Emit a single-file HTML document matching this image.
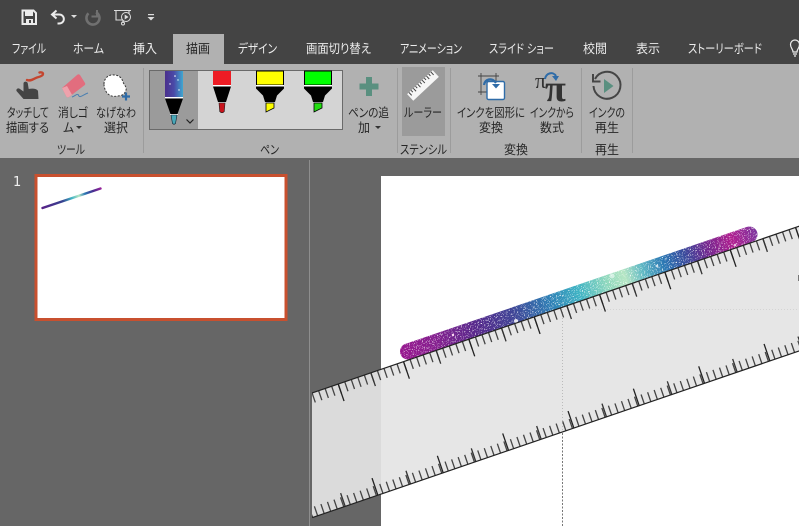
<!DOCTYPE html>
<html lang="ja"><head><meta charset="utf-8"><title>描画</title>
<style>
html,body{margin:0;padding:0;background:#666;width:799px;height:526px;overflow:hidden}
svg{display:block}
text{font-family:"Liberation Sans","Noto Sans CJK JP",sans-serif;font-feature-settings:"palt";font-size:12.500px}
.t text{fill:#ececec}
.r text{fill:#262626}
</style></head><body>
<svg width="799" height="526" viewBox="0 0 799 526" xmlns="http://www.w3.org/2000/svg">
<defs>
<linearGradient id="ink" gradientUnits="userSpaceOnUse" x1="400" y1="354" x2="757" y2="232">
<stop offset="0" stop-color="#98188f"/><stop offset=".1" stop-color="#85208f"/><stop offset=".22" stop-color="#552a8c"/><stop offset=".32" stop-color="#3f4596"/><stop offset=".42" stop-color="#2f7fb5"/><stop offset=".5" stop-color="#3fb3c4"/><stop offset=".58" stop-color="#8fd8bd"/><stop offset=".63" stop-color="#b6e6c4"/><stop offset=".68" stop-color="#5fb8c4"/><stop offset=".74" stop-color="#2c78b4"/><stop offset=".8" stop-color="#3b4a9c"/><stop offset=".86" stop-color="#72288f"/><stop offset=".93" stop-color="#b01f90"/><stop offset="1" stop-color="#7d379f"/>
</linearGradient>
<linearGradient id="minik" gradientUnits="userSpaceOnUse" x1="41" y1="208" x2="102" y2="188">
<stop offset="0" stop-color="#5a2088"/><stop offset=".35" stop-color="#35408f"/><stop offset=".5" stop-color="#3fb3c4"/><stop offset=".62" stop-color="#b6e6c4"/><stop offset=".72" stop-color="#2c78b4"/><stop offset=".85" stop-color="#45308f"/><stop offset="1" stop-color="#a0209a"/>
</linearGradient>
<linearGradient id="galaxy" x1="0" y1="0" x2="1" y2="0">
<stop offset="0" stop-color="#4a2f8c"/><stop offset=".5" stop-color="#4a4aa8"/><stop offset="1" stop-color="#3fa8d0"/>
</linearGradient>
<filter id="gl" x="-5%" y="-20%" width="110%" height="140%" color-interpolation-filters="sRGB">
<feTurbulence type="fractalNoise" baseFrequency=".85" numOctaves="2" seed="4"/>
<feColorMatrix values="0 0 0 0 1 0 0 0 0 1 0 0 0 0 1 6 0 0 0 -3.500"/>
<feComposite in2="SourceAlpha" operator="in" result="s"/>
<feMerge><feMergeNode in="SourceGraphic"/><feMergeNode in="s"/></feMerge>
</filter>
<clipPath id="rc"><rect x="312" y="160" width="487" height="366"/></clipPath>
</defs>

<!-- backgrounds -->
<rect width="799" height="64" fill="#444"/>
<rect y="64" width="799" height="94" fill="#b1b1b1"/>
<rect y="158" width="799" height="368" fill="#666"/>
<rect x="173" y="34" width="51" height="30" fill="#b1b1b1"/>
<rect x="309" y="160" width="1" height="366" fill="#8e8e8e"/>

<!-- QAT -->
<g>
<path d="M22.500 10.500h11l2.500 2.500v11h-13.500z" fill="none" stroke="#ececec" stroke-width="2"/>
<rect x="25" y="11" width="8" height="5" fill="#ececec"/><rect x="26" y="19" width="7" height="5" fill="#ececec"/><rect x="29" y="20" width="2" height="3" fill="#444"/>
<path d="M56.500 10.500l-4.500 4 4.500 4" fill="none" stroke="#ececec" stroke-width="2"/>
<path d="M52 14.500h7c6.500 0 6.500 9 0 9h-1.500" fill="none" stroke="#ececec" stroke-width="2"/>
<path d="M71 15h6l-3 3z" fill="#ddd"/>
<path d="M96 12.300A6.500 6.500 0 1 1 88.500 13.300" fill="none" stroke="#707070" stroke-width="2.600"/>
<path d="M97 10v6.500h-5.500" fill="none" stroke="#707070" stroke-width="2"/>
<path d="M114 10.500h17M116 11v9h13v-9M123 20v3" fill="none" stroke="#ddd" stroke-width="1.100"/>
<circle cx="126" cy="17" r="4.500" fill="#444" stroke="#ddd"/><path d="M124.700 14.500v5l3.800-2.500z" fill="#ddd"/>
<circle cx="123" cy="23.500" r="1.500" fill="none" stroke="#ddd"/>
<rect x="148" y="14" width="6" height="1.200" fill="#ddd"/><path d="M147.500 17h7l-3.500 3.500z" fill="#ddd"/>
</g>

<!-- tabs -->
<g class="t">
<text x="12" y="53" textLength="34" lengthAdjust="spacingAndGlyphs">ファイル</text>
<text x="73" y="53" textLength="31" lengthAdjust="spacingAndGlyphs">ホーム</text>
<text x="133" y="53" textLength="24" lengthAdjust="spacingAndGlyphs">挿入</text>
<text x="186" y="53" textLength="24" lengthAdjust="spacingAndGlyphs" style="fill:#262626">描画</text>
<text x="238" y="53" textLength="39" lengthAdjust="spacingAndGlyphs">デザイン</text>
<text x="306" y="53" textLength="65" lengthAdjust="spacingAndGlyphs">画面切り替え</text>
<text x="400" y="53" textLength="62" lengthAdjust="spacingAndGlyphs">アニメーション</text>
<text x="489" y="53" textLength="65" lengthAdjust="spacingAndGlyphs">スライド ショー</text>
<text x="583" y="53" textLength="24" lengthAdjust="spacingAndGlyphs">校閲</text>
<text x="636" y="53" textLength="24" lengthAdjust="spacingAndGlyphs">表示</text>
<text x="688" y="53" textLength="74" lengthAdjust="spacingAndGlyphs">ストーリーボード</text>
</g>
<path d="M793 52c0-3-2.500-4-2.500-7.500a4.500 4.500 0 0 1 9 0c0 3.500-2.500 4.500-2.500 7.500z" fill="none" stroke="#ececec" stroke-width="1.200"/>
<path d="M793 54h4M794 56h2" stroke="#ececec" stroke-width="1.200"/>

<!-- group separators -->
<g fill="#9c9c9c">
<rect x="143" y="68" width="1" height="85"/><rect x="397" y="68" width="1" height="85"/><rect x="450" y="68" width="1" height="85"/><rect x="581" y="68" width="1" height="85"/><rect x="632" y="68" width="1" height="85"/>
</g>

<!-- touch icon -->
<path d="M27 80c4 1.500 7-1.500 10-2.500 4-1 6-2 6-3.500 0-1.500-2-2-3.500-1.500" fill="none" stroke="#c4452f" stroke-width="2.400" stroke-linecap="round"/>
<path d="M23.500 83.500c0-2.500 4-2.500 4.300 0l.9 5.500c3-.8 8.300-.5 9.300 2l.5 8H23.500L16.500 91c-.6-2 1.500-3.500 3.500-2l3.500 2.500z" fill="#444"/>
<!-- eraser -->
<path d="M62 88l15-13c1-1 2-1 3 0l5 8c.5 1 .3 1.500-.5 2.200L69 97c-1 .7-2 .5-2.700-.5z" fill="#e26d7e"/>
<path d="M62 88l4.300 8.500c.7 1 1.700 1.200 2.700.5l3-2.300-5-8.700z" fill="#eea2ac"/>
<path d="M72 97c3-1 5-3.500 6-2.500s.5 2.500 2.500 2c2-.6 4.500-2.500 7.500-3.500" fill="none" stroke="#4a7fb0" stroke-width="1"/>
<!-- lasso -->
<path d="M104 84c0-6 5-10 10-9 5 0 8 3 9 7 1 3 4 5 3 8-1 4-4 6-9 6-4 1-7 0-10-3-2-3-3-6-3-9z" fill="#fff" stroke="#333" stroke-width="1" stroke-dasharray="2 1.500"/>
<path d="M122 96.500h8M126 92.500v8" stroke="#2f6ca8" stroke-width="2.200"/>

<!-- ribbon text -->
<g class="r">
<text x="7" y="117" textLength="42" lengthAdjust="spacingAndGlyphs">タッチして</text>
<text x="6" y="132" textLength="43" lengthAdjust="spacingAndGlyphs">描画する</text>
<text x="58" y="117" textLength="30" lengthAdjust="spacingAndGlyphs">消しゴ</text>
<text x="63" y="132" textLength="11" lengthAdjust="spacingAndGlyphs">ム</text>
<text x="96" y="117" textLength="40" lengthAdjust="spacingAndGlyphs">なげなわ</text>
<text x="104" y="132" textLength="24" lengthAdjust="spacingAndGlyphs">選択</text>
<text x="57" y="154" textLength="28" lengthAdjust="spacingAndGlyphs">ツール</text>
<text x="260" y="154" textLength="19" lengthAdjust="spacingAndGlyphs">ペン</text>
<text x="348" y="117" textLength="41" lengthAdjust="spacingAndGlyphs">ペンの追</text>
<text x="358" y="132" textLength="12" lengthAdjust="spacingAndGlyphs">加</text>
<text x="457" y="117" textLength="68" lengthAdjust="spacingAndGlyphs">インクを図形に</text>
<text x="479" y="132" textLength="24" lengthAdjust="spacingAndGlyphs">変換</text>
<text x="530" y="117" textLength="44" lengthAdjust="spacingAndGlyphs">インクから</text>
<text x="540" y="132" textLength="24" lengthAdjust="spacingAndGlyphs">数式</text>
<text x="589" y="117" textLength="36" lengthAdjust="spacingAndGlyphs">インクの</text>
<text x="595" y="132" textLength="24" lengthAdjust="spacingAndGlyphs">再生</text>
<text x="400" y="154" textLength="47" lengthAdjust="spacingAndGlyphs">ステンシル</text>
<text x="504" y="154" textLength="24" lengthAdjust="spacingAndGlyphs">変換</text>
<text x="595" y="154" textLength="24" lengthAdjust="spacingAndGlyphs">再生</text>
</g>
<path d="M76 126h6l-3 3zM375 126h6l-3 3z" fill="#333"/>

<!-- pen gallery -->
<rect x="149.500" y="70.500" width="193" height="59" fill="#d4d4d4" stroke="#6a6a6a"/>
<rect x="150" y="71" width="48" height="58" fill="#9b9b9b"/>
<rect x="165" y="71" width="18" height="26" fill="url(#galaxy)"/>
<circle cx="175" cy="76" r=".8" fill="#fff"/><circle cx="170" cy="84" r=".7" fill="#fff"/><circle cx="179" cy="90" r=".7" fill="#fff"/><circle cx="178" cy="80" r=".7" fill="#dff"/>
<rect x="165" y="97" width="18" height="1.400" fill="#fff"/>
<path d="M165 98.500h18l-5.500 15.500h-7z" fill="#000"/>
<rect x="170" y="114" width="8" height="1" fill="#fff"/>
<path d="M171 115h6l-1.500 8.500q-1.500 1.500-3 0z" fill="#49a8b8" stroke="#123" stroke-width=".6"/>
<path d="M186.500 119.500l3.500 3.500 3.500-3.500" fill="none" stroke="#222" stroke-width="1.200"/>

<rect x="213" y="71" width="18" height="14" fill="#ed1c24"/>
<rect x="213" y="85" width="18" height="1.400" fill="#fff"/>
<path d="M213 86.500h18l-5 15.500h-8z" fill="#000"/>
<path d="M219 103h6l-.7 8.500q-2.300 2.500-4.600 0z" fill="#c8141c" stroke="#222" stroke-width=".6"/>

<rect x="256.500" y="71" width="27" height="14" fill="#ffff00" stroke="#000"/>
<rect x="256" y="85" width="28" height="1.400" fill="#fff"/>
<path d="M256 86.500h28v2l-7 7-2 6.500h-10l-2-6.500-7-7z" fill="#000"/>
<path d="M266 103h8v5l-8 4z" fill="#ffff00" stroke="#000" stroke-width=".8"/>

<rect x="304.500" y="71" width="27" height="14" fill="#00ff00" stroke="#000"/>
<rect x="304" y="85" width="28" height="1.400" fill="#fff"/>
<path d="M304 86.500h28v2l-7 7-2 6.500h-10l-2-6.500-7-7z" fill="#000"/>
<path d="M314 103h8v5l-8 4z" fill="#22dd11" stroke="#000" stroke-width=".8"/>

<!-- add pen -->
<path d="M366 77h6v6.500h6.500v6H372V96h-6v-6.500h-6.500v-6h6.500z" fill="#5a9080"/>

<!-- ruler button -->
<rect x="402" y="67" width="43" height="69" fill="#9b9b9b"/>
<g transform="translate(423 85.500) rotate(-43)">
<rect x="-17.500" y="-4.500" width="35" height="9" fill="#f6f6f6"/>
<path d="M-15 -4.500v4M-12 -4.500v2.500M-9 -4.500v4M-6 -4.500v2.500M-3 -4.500v4M0 -4.500v2.500M3 -4.500v4M6 -4.500v2.500M9 -4.500v4M12 -4.500v2.500M15 -4.500v4" stroke="#444" stroke-width="1"/>
</g>
<text x="404" y="117" textLength="38" lengthAdjust="spacingAndGlyphs" style="fill:#262626">ルーラー</text>

<!-- ink to shape -->
<path d="M481 73v22M478 76h21M478 92h10M496 73v8" fill="none" stroke="#444" stroke-width=".9"/>
<rect x="487" y="81.500" width="17.500" height="18" rx="1.500" fill="#fff" stroke="#2f6ca8" stroke-width="1.400"/>
<path d="M484 85c1-6 8-8 12-2" fill="none" stroke="#2f6ca8" stroke-width="2.200"/>
<path d="M492 84h8l-4 4.500z" fill="#2f6ca8"/>

<!-- ink to math -->
<text x="535" y="88" style="font-family:'Liberation Serif',serif;font-size:22px;fill:#333">π</text>
<text x="545" y="101" style="font-family:'Liberation Serif',serif;font-size:38px;font-weight:bold;fill:#333">π</text>
<path d="M545 79c1-6 8-8 11-3" fill="none" stroke="#2f6ca8" stroke-width="2"/>
<path d="M552 76h7l-3 5z" fill="#2f6ca8"/>

<!-- replay -->
<path d="M595 79a13.500 13.500 0 1 1-1.500 7" fill="none" stroke="#454545" stroke-width="2"/>
<path d="M593 74v7.500h7.500" fill="none" stroke="#454545" stroke-width="2"/>
<path d="M604 79l9.500 7-9.500 7z" fill="#5a9080"/>

<!-- slide pane -->
<text x="13" y="186" style="font-family:'DejaVu Sans',sans-serif;font-size:13px;fill:#f0f0f0">1</text>
<rect x="36" y="175.500" width="250" height="144" fill="#fff" stroke="#c8502f" stroke-width="3"/>
<path d="M42.500 208L100.500 188.500" stroke="url(#minik)" stroke-width="2.400" stroke-linecap="round"/>

<!-- slide -->
<rect x="381" y="176" width="418" height="350" fill="#fff"/>
<path d="M562.500 433V526" stroke="#777" stroke-width="1" stroke-dasharray="2 1.500"/>

<!-- ink -->
<path d="M408 351.500L749.500 234.500" stroke="url(#ink)" stroke-width="16" stroke-linecap="round" fill="none" filter="url(#gl)"/>
<g fill="#fff">
<circle cx="453" cy="335" r="1.200" fill="#ffd9f5"/><circle cx="516" cy="321" r="2" fill-opacity=".85"/><circle cx="612" cy="276" r="2.500" fill-opacity=".55"/><circle cx="657" cy="266" r="1.300" fill-opacity=".7"/><circle cx="735" cy="245" r="1.300" fill-opacity=".7"/>
</g>

<!-- ruler -->
<g clip-path="url(#rc)">
<polygon points="312,393 799,226.200 799,350.900 312,517.700" fill="rgba(228,228,228,.93)"/>
<path d="M562.500 312V430" stroke="#bbb" stroke-width="1" stroke-dasharray="1 2"/>
<path d="M562 309.500H799" stroke="#d4d4d4" stroke-width="1" stroke-dasharray="1 2"/>
<g transform="translate(312 393) rotate(-18.900)" fill="none">
<line x1="-42" y1="5" x2="560" y2="5" stroke="#444" stroke-width="10" stroke-dasharray="1.300 5.606"/>
<line x1="-42" y1="9" x2="560" y2="9" stroke="#222" stroke-width="18" stroke-dasharray="1.300 67.760"/>
<line x1="-7.500" y1="7" x2="560" y2="7" stroke="#333" stroke-width="14" stroke-dasharray="1.300 67.760"/>
<line x1="-42" y1="113" x2="560" y2="113" stroke="#444" stroke-width="10" stroke-dasharray="1.300 5.606"/>
<line x1="-40.500" y1="109" x2="560" y2="109" stroke="#222" stroke-width="18" stroke-dasharray="1.300 67.760"/>
<line x1="-6" y1="111" x2="560" y2="111" stroke="#333" stroke-width="14" stroke-dasharray="1.300 67.760"/>
<line x1="-40" y1="0" x2="560" y2="0" stroke="#222" stroke-width="1.200"/>
<line x1="-40" y1="118" x2="560" y2="118" stroke="#222" stroke-width="1.200"/>
</g>
<path d="M798.500 275v6" stroke="#777" stroke-width="1"/>
</g>
<rect x="310" y="160" width="2" height="366" fill="#666"/>
</svg>
</body></html>
